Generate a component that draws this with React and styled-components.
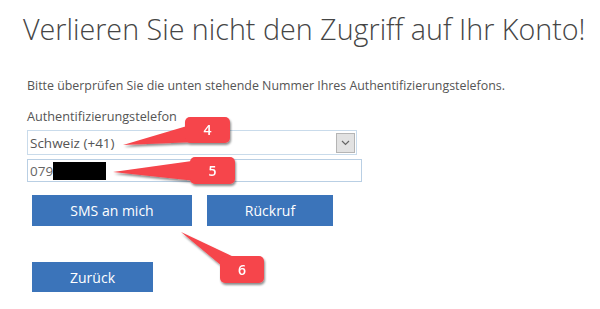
import React from 'react';
import styled, { createGlobalStyle } from 'styled-components';

const GlobalStyle = createGlobalStyle`
  body {
    margin: 0;
    background: #fff;
    font-family: "Open Sans", "Liberation Sans", sans-serif;
  }
`;

const Page = styled.div`
  position: relative;
  width: 600px;
  height: 309px;
  overflow: hidden;
  padding: 10px 0 0 23px;
  box-sizing: border-box;
`;

const Title = styled.h1`
  margin: 0;
  font-size: 28.7px;
  line-height: 37px;
  font-weight: 300;
  color: #454545;
  white-space: nowrap;
`;

const Intro = styled.p`
  margin: 31px 0 0 4px;
  font-size: 12.4px;
  line-height: 16px;
  color: #555;
  white-space: nowrap;
`;

const Field = styled.div`
  margin: 14px 0 0 4px;
  display: flex;
  flex-direction: column;
  width: 335px;
`;

const Label = styled.label`
  font-size: 12.7px;
  line-height: 16px;
  color: #555;
  margin-bottom: 6px;
`;

const SelectBox = styled.div`
  display: flex;
  align-items: center;
  justify-content: space-between;
  width: 330px;
  height: 25px;
  box-sizing: border-box;
  border: 1px solid #c9dbeb;
  padding: 0 1px 0 2px;
  font-size: 13.5px;
  color: #555;
`;

const DropButton = styled.span`
  display: flex;
  align-items: center;
  justify-content: center;
  width: 19px;
  height: 20px;
  box-sizing: border-box;
  background: #e2e2e2;
  border: 1px solid #b5b5b5;
`;

const PhoneInput = styled.div`
  display: flex;
  align-items: center;
  margin-top: 4px;
  width: 335px;
  height: 23px;
  box-sizing: border-box;
  border: 1px solid #b9cfe4;
  padding-left: 2px;
  font-size: 13.5px;
  color: #666;
`;

const Redacted = styled.span`
  display: inline-block;
  width: 53px;
  height: 18px;
  background: #000;
`;

const ButtonRow = styled.div`
  display: flex;
  gap: 15px;
  margin: 13px 0 0 9px;
`;

const Button = styled.button`
  width: ${p => p.$w}px;
  height: ${p => p.$h || 31}px;
  border: none;
  background: #3b74ba;
  color: #fff;
  font-family: "Open Sans", "Liberation Sans", sans-serif;
  font-size: 14px;
  padding: 0;
`;

const BackRow = styled.div`
  margin: 36px 0 0 9px;
`;

const Overlay = styled.svg`
  position: absolute;
  left: 0;
  top: 0;
  pointer-events: none;
`;

const callouts = [
  { n: 4, x: 185, y: 117, w: 45, h: 26, tail: '187,126 123,145 196,142' },
  { n: 5, x: 190, y: 157, w: 45, h: 27, tail: '192,161 113,172 196,181' },
  { n: 6, x: 220, y: 256, w: 44, h: 27, tail: '236,258 181,232 222,266' },
];

const Callouts = () => (
  <Overlay width="600" height="309">
    <defs>
      <filter id="shadow" x="-20%" y="-20%" width="140%" height="160%">
        <feDropShadow dx="1" dy="2" stdDeviation="1.2" floodColor="#000" floodOpacity="0.45" />
      </filter>
    </defs>
    {callouts.map(c => (
      <g key={c.n} filter="url(#shadow)">
        <polygon points={c.tail} fill="#f6444b" />
        <rect x={c.x} y={c.y} width={c.w} height={c.h} rx="5" fill="#f6444b" />
        <text
          x={c.x + c.w / 2}
          y={c.y + c.h / 2 + 5}
          textAnchor="middle"
          fill="#fff"
          fontSize="14"
          fontWeight="600"
          fontFamily="Open Sans, sans-serif"
        >
          {c.n}
        </text>
      </g>
    ))}
  </Overlay>
);

export default function App() {
  return (
    <>
      <GlobalStyle />
      <Page>
        <Title>Verlieren Sie nicht den Zugriff auf Ihr Konto!</Title>
        <Intro>Bitte überprüfen Sie die unten stehende Nummer Ihres Authentifizierungstelefons.</Intro>
        <Field>
          <Label>Authentifizierungstelefon</Label>
          <SelectBox>
            <span>Schweiz (+41)</span>
            <DropButton>
              <svg width="9" height="6" viewBox="0 0 9 6">
                <path d="M1 1 L4.5 4.5 L8 1" fill="none" stroke="#666" strokeWidth="1.2" />
              </svg>
            </DropButton>
          </SelectBox>
          <PhoneInput>
            079<Redacted />
          </PhoneInput>
        </Field>
        <ButtonRow>
          <Button $w={160}>SMS an mich</Button>
          <Button $w={126}>Rückruf</Button>
        </ButtonRow>
        <BackRow>
          <Button $w={121} $h={30}>Zurück</Button>
        </BackRow>
        <Callouts />
      </Page>
    </>
  );
}
